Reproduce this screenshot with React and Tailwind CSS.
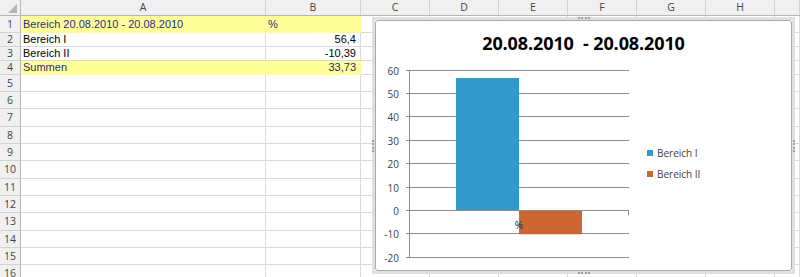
import React from 'react';

// Spalten und Zeilen des Tabellenblatts
const cols = [
    { label: 'A', w: 'w-[245px]' },
    { label: 'B', w: 'w-[95px]' },
    { label: 'C', w: 'w-[69px]' },
    { label: 'D', w: 'w-[69px]' },
    { label: 'E', w: 'w-[69px]' },
    { label: 'F', w: 'w-[69px]' },
    { label: 'G', w: 'w-[69px]' },
    { label: 'H', w: 'w-[69px]' },
    { label: '', w: 'flex-1' },
];

const rowHeights = ['h-[17px]', 'h-[14px]', 'h-[14px]', 'h-[14px]', 'h-[17px]', 'h-[17px]', 'h-[18px]', 'h-[17px]', 'h-[17px]', 'h-[18px]', 'h-[17px]', 'h-[17px]', 'h-[18px]', 'h-[17px]', 'h-[17px]', 'h-[17px]'];

const data = {
    1: { a: 'Bereich 20.08.2010 - 20.08.2010', b: '%', bLeft: true, fill: true },
    2: { a: 'Bereich I', b: '56,4' },
    3: { a: 'Bereich II', b: '-10,39' },
    4: { a: 'Summen', b: '33,73', fill: true },
};

const ticks = [60, 50, 40, 30, 20, 10, 0, -10, -20];
const yOf = (v) => Math.round(148 - v * 2.34) + 0.5;

const Chart = () => (
    <div className="absolute left-[372px] top-[17px] w-[423px] h-[257px] border-[3px] border-[#e0e0e0]">
        <span className="absolute left-[203px] top-[-3px] w-[12px] border-t-2 border-dotted border-[#a0a0a0]" />
        <span className="absolute left-[203px] bottom-[-3px] w-[12px] border-t-2 border-dotted border-[#a0a0a0]" />
        <span className="absolute left-[-3px] top-[120px] h-[12px] border-l-2 border-dotted border-[#a0a0a0]" />
        <span className="absolute right-[-3px] top-[120px] h-[12px] border-l-2 border-dotted border-[#a0a0a0]" />
        <div className="h-full w-full border border-[#a8a8a8] rounded-[3px] bg-white font-['Open_Sans',sans-serif]">
            <div className="h-[41px] pt-[10px] text-center text-[18px] leading-[24px] font-bold text-black whitespace-pre tracking-[-0.1px]">
                {'20.08.2010  - 20.08.2010'}
            </div>
            <div className="flex items-start">
                <svg className="ml-[4px] block" width="262" height="204">
                    {ticks.map((v) => (
                        <g key={v}>
                            <line x1="26" x2="249" y1={yOf(v)} y2={yOf(v)} stroke="#8c8c8c" strokeWidth="1" />
                            <text x="19" y={yOf(v)} textAnchor="end" dominantBaseline="central" fontSize="10" fill="#404040">{v}</text>
                        </g>
                    ))}
                    <rect x="76" y="16" width="63" height="132" fill="#3399cc" />
                    <rect x="139" y="148.5" width="63" height="23.8" fill="#cc6633" />
                    <line x1="29.5" x2="29.5" y1="8.5" y2="195.5" stroke="#8c8c8c" strokeWidth="1" />
                    <line x1="26" x2="249" y1="148.5" y2="148.5" stroke="#8c8c8c" strokeWidth="1" />
                    <line x1="248.5" x2="248.5" y1="148.5" y2="153" stroke="#8c8c8c" strokeWidth="1" />
                    <text x="139" y="163" textAnchor="middle" dominantBaseline="central" fontSize="10" fill="#262626">%</text>
                </svg>
                <div className="ml-[5px] mt-[84px] flex flex-col gap-[7px] text-[10px] leading-[14px] text-[#404040]">
                    <div className="flex items-center gap-[4px]">
                        <span className="w-[6px] h-[6px] bg-[#3399cc]" />
                        <span>Bereich I</span>
                    </div>
                    <div className="flex items-center gap-[4px]">
                        <span className="w-[6px] h-[6px] bg-[#cc6633]" />
                        <span>Bereich II</span>
                    </div>
                </div>
            </div>
        </div>
    </div>
);

const App = () => {
    return (
        <div className="relative w-[800px] h-[277px] overflow-hidden bg-white font-['Liberation_Sans',Arial,sans-serif]">
            {/* Spaltenköpfe */}
            <div className="flex h-[16px] bg-[#f0f0f0] border-b border-[#b5b5b5] font-['Open_Sans',sans-serif] text-[10.5px] text-[#444]">
                <div className="w-[21px] shrink-0 border-r border-[#b5b5b5] flex items-end justify-end pr-[3px] pb-[2px]">
                    <svg width="9" height="9"><polygon points="9,0 9,9 0,9" fill="#b4b4b4" /></svg>
                </div>
                {cols.map((c, i) => (
                    <div key={i} className={`${c.w} shrink-0 border-r border-[#d2d2d2] flex items-center justify-center leading-none`}>{c.label}</div>
                ))}
            </div>
            {/* Zeilen */}
            {rowHeights.map((h, r) => {
                const n = r + 1;
                const d = data[n];
                const fill = d && d.fill;
                const cellBorder = fill ? 'border-[#ffff99] bg-[#ffff99] text-[#2b2b85]' : 'border-[#dadada] text-black';
                return (
                    <div key={n} className={`flex ${h} text-[11px]`}>
                        <div className="w-[21px] shrink-0 bg-[#f0f0f0] border-r border-b border-r-[#b5b5b5] border-b-[#d2d2d2] flex items-center justify-center font-['Open_Sans',sans-serif] text-[10.5px] text-[#444] leading-none">{n}</div>
                        <div className={`w-[245px] shrink-0 border-r border-b ${cellBorder} flex items-center pl-[2px] whitespace-nowrap`}>{d ? d.a : ''}</div>
                        <div className={`w-[95px] shrink-0 border-r border-b ${cellBorder} flex items-center ${d && d.bLeft ? 'pl-[2px]' : 'justify-end pr-[4px]'}`}>{d ? d.b : ''}</div>
                        {cols.slice(2).map((c, i) => (
                            <div key={i} className={`${c.w} shrink-0 border-r border-b border-[#dadada]`} />
                        ))}
                    </div>
                );
            })}
            <Chart />
        </div>
    );
};

export default App;
